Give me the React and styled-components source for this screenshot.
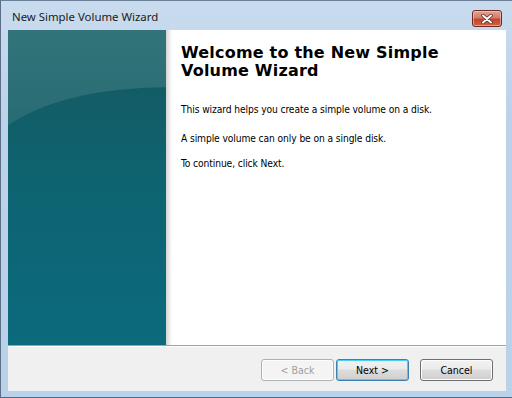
import React from "react";
import styled, { createGlobalStyle } from "styled-components";

const Global = createGlobalStyle`
  html, body { margin: 0; padding: 0; background: #fff; }
  body { width: 512px; height: 398px; overflow: hidden; }
`;

const Window = styled.div`
  width: 512px;
  height: 398px;
  box-sizing: border-box;
  display: flex;
  flex-direction: column;
  background: linear-gradient(180deg, #c9dbee 0%, #bcd2ea 30%, #bad1ea 100%);
  border-left: 1px solid #5c6f86;
  border-top: 1px solid #6b7f96;
  border-bottom: 1px solid #4a6a88;
`;

const TitleBar = styled.div`
  height: 29px;
  flex: none;
  display: flex;
  align-items: flex-start;
  justify-content: space-between;
  padding: 0 10px 0 11px;
`;

const Title = styled.div`
  font-family: "Noto Sans", "Open Sans", sans-serif;
  font-size: 11.4px;
  color: #1a1a1a;
  margin-top: 8px;
`;

const CloseButton = styled.div`
  margin-top: 9px;
  width: 30px;
  height: 17px;
  box-sizing: border-box;
  border: 1px solid #6e2a22;
  border-radius: 3px;
  background: linear-gradient(180deg, #e3a293 0%, #d47d6b 45%, #bf4630 55%, #cf6340 100%);
  box-shadow: inset 0 0 0 1px rgba(255, 220, 210, 0.5);
  display: flex;
  align-items: center;
  justify-content: center;
`;

const Body = styled.div`
  flex: 1;
  display: flex;
  flex-direction: column;
  margin: 0 6px 6px 7px;
  background: #fff;
`;

const Main = styled.div`
  flex: 1;
  display: flex;
  background: #fff;
`;

const SidePanel = styled.div`
  width: 158px;
  flex: none;
  background: linear-gradient(180deg, #327479 0%, #2a6d74 25%, #0e6674 60%, #0b6a7d 100%);
  position: relative;
  overflow: hidden;
`;

const PanelArt = styled.svg`
  position: absolute;
  inset: 0;
  width: 100%;
  height: 100%;
`;

const Shade = styled.div`
  width: 6px;
  flex: none;
  background: linear-gradient(90deg, #d4d4d4 0%, #eaeaea 50%, #fff 100%);
`;

const Content = styled.div`
  flex: 1;
  padding: 14px 12px 0 9px;
  display: flex;
  flex-direction: column;
`;

const Heading = styled.h1`
  margin: 0;
  font-family: "DejaVu Sans", Verdana, sans-serif;
  font-weight: bold;
  font-size: 16px;
  letter-spacing: 0.2px;
  line-height: 18px;
  color: #000;
  width: 300px;
`;

const Para = styled.p`
  margin: ${(p) => p.$top}px 0 0 0;
  font-family: "DejaVu Sans Condensed", Tahoma, sans-serif;
  font-size: 10.2px;
  letter-spacing: -0.1px;
  line-height: 13px;
  color: #000;
`;

const Footer = styled.div`
  height: 46px;
  flex: none;
  box-sizing: border-box;
  border-top: 1px solid #a0a0a0;
  background: #f0f0f0;
  box-shadow: inset 0 1px 0 #ffffff;
  display: flex;
  align-items: center;
  justify-content: flex-end;
  padding: 0 13px 0 0;
`;

const Button = styled.button`
  width: 73px;
  height: 22px;
  margin-left: ${(p) => p.$gap}px;
  box-sizing: border-box;
  border-radius: 3px;
  border: 1px solid ${(p) => (p.$disabled ? "#adb2b5" : p.$default ? "#3c7fb1" : "#707070")};
  background: ${(p) =>
    p.$disabled
      ? "#f4f4f4"
      : "linear-gradient(180deg, #f2f2f2 0%, #ebebeb 45%, #dddddd 50%, #cfcfcf 100%)"};
  box-shadow: ${(p) =>
    p.$default ? "inset 0 0 0 1px #48d0f9" : "inset 0 0 0 1px #fcfcfc"};
  font-family: "DejaVu Sans Condensed", Tahoma, sans-serif;
  font-size: 10.5px;
  color: ${(p) => (p.$disabled ? "#a0a0a0" : "#000")};
  padding: 0;
  margin-top: 2px;
`;

export default function App() {
  return (
    <>
      <Global />
      <Window>
        <TitleBar>
          <Title>New Simple Volume Wizard</Title>
          <CloseButton>
            <svg width="12" height="10" viewBox="0 0 12 10">
              <path d="M2 1.5 L10 8.5 M10 1.5 L2 8.5" stroke="#5a231c" strokeWidth="3.4" strokeLinecap="round" />
              <path d="M2 1.5 L10 8.5 M10 1.5 L2 8.5" stroke="#ffffff" strokeWidth="2" strokeLinecap="round" />
            </svg>
          </CloseButton>
        </TitleBar>
        <Body>
          <Main>
            <SidePanel>
              <PanelArt viewBox="0 0 158 314" preserveAspectRatio="none">
                <defs>
                  <linearGradient id="lower" x1="0" y1="0" x2="0" y2="1">
                    <stop offset="0" stopColor="#135c66" />
                    <stop offset="0.35" stopColor="#0e6370" />
                    <stop offset="1" stopColor="#0b6a7d" />
                  </linearGradient>
                </defs>
                <path d="M0 95 Q 55 58 158 57 L158 314 L0 314 Z" fill="url(#lower)" />
              </PanelArt>
            </SidePanel>
            <Shade />
            <Content>
              <Heading>Welcome to the New Simple Volume Wizard</Heading>
              <Para $top={23}>This wizard helps you create a simple volume on a disk.</Para>
              <Para $top={16}>A simple volume can only be on a single disk.</Para>
              <Para $top={12}>To continue, click Next.</Para>
            </Content>
          </Main>
          <Footer>
            <Button $disabled $gap={0} disabled>&lt; Back</Button>
            <Button $default $gap={2}>Next &gt;</Button>
            <Button $gap={11}>Cancel</Button>
          </Footer>
        </Body>
      </Window>
    </>
  );
}
